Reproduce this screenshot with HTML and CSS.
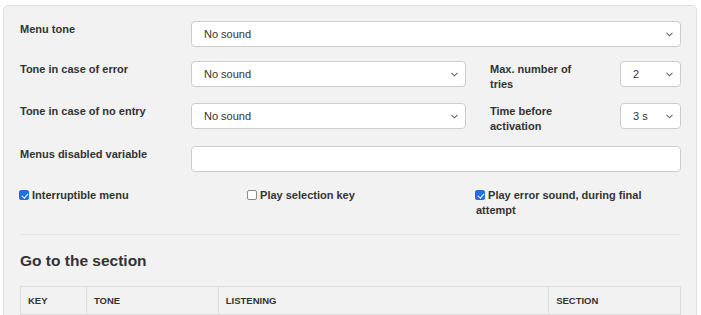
FILE: index.html
```html
<!DOCTYPE html>
<html lang="en">

<head>
  <meta charset="utf-8" />
  <title>Menu settings</title>
  <meta name="viewport" content="width=device-width, initial-scale=1">
  <link rel="stylesheet" href="styles.css">
</head>

<body>
  <section class="panel">
    <!-- ===== FORM ===== -->
    <div class="form-grid">
      <label class="lbl">Menu tone</label>
      <div class="select-wrap span-all">
        <select><option>No sound</option></select>
        <svg class="chev" width="7" height="5" viewBox="0 0 7 5"><path d="M0.5 0.8 L3.5 3.8 L6.5 0.8" fill="none" stroke="#666" stroke-width="1.1"/></svg>
      </div>

      <label class="lbl">Tone in case of error</label>
      <div class="select-wrap">
        <select><option>No sound</option></select>
        <svg class="chev" width="7" height="5" viewBox="0 0 7 5"><path d="M0.5 0.8 L3.5 3.8 L6.5 0.8" fill="none" stroke="#666" stroke-width="1.1"/></svg>
      </div>
      <label class="lbl lbl-side">Max. number of tries</label>
      <div class="select-wrap">
        <select><option>2</option></select>
        <svg class="chev" width="7" height="5" viewBox="0 0 7 5"><path d="M0.5 0.8 L3.5 3.8 L6.5 0.8" fill="none" stroke="#666" stroke-width="1.1"/></svg>
      </div>

      <label class="lbl">Tone in case of no entry</label>
      <div class="select-wrap">
        <select><option>No sound</option></select>
        <svg class="chev" width="7" height="5" viewBox="0 0 7 5"><path d="M0.5 0.8 L3.5 3.8 L6.5 0.8" fill="none" stroke="#666" stroke-width="1.1"/></svg>
      </div>
      <label class="lbl lbl-side">Time before activation</label>
      <div class="select-wrap">
        <select><option>3 s</option></select>
        <svg class="chev" width="7" height="5" viewBox="0 0 7 5"><path d="M0.5 0.8 L3.5 3.8 L6.5 0.8" fill="none" stroke="#666" stroke-width="1.1"/></svg>
      </div>

      <label class="lbl">Menus disabled variable</label>
      <input class="text-input span-all" type="text">
    </div>

    <!-- ===== CHECKS ===== -->
    <div class="checks">
      <label class="check"><input type="checkbox" checked> Interruptible menu</label>
      <label class="check"><input type="checkbox"> Play selection key</label>
      <label class="check"><input type="checkbox" checked> Play error sound, during final attempt</label>
    </div>

    <hr class="sep">

    <h2>Go to the section</h2>

    <table class="sections">
      <thead>
        <tr>
          <th class="c-key">Key</th>
          <th class="c-tone">Tone</th>
          <th class="c-listen">Listening</th>
          <th class="c-section">Section</th>
        </tr>
      </thead>
    </table>
  </section>
</body>

</html>
```

FILE: styles.css
```css
/* ===== RESET & BODY ===== */
* {
  box-sizing: border-box;
  margin: 0;
  padding: 0
}

body {
  font-family: "Liberation Sans", Arial, sans-serif;
  font-size: 11px;
  color: #333;
  background: #fff;
  padding: 5px 4px 0 3px
}

/* ===== PANEL ===== */
.panel {
  background: #f2f2f2;
  border: 1px solid #e0e0e0;
  border-radius: 5px;
  padding: 15px 15px 20px 16px;
  min-height: 340px
}

/* ===== FORM ===== */
.form-grid {
  display: grid;
  grid-template-columns: 171px 275px 154px 61px;
  grid-template-rows: 26px 28px 29px 26px;
  row-gap: 14px
}

.lbl {
  font-weight: bold;
  line-height: 15px;
  padding-top: 1px
}

.lbl-side {
  padding-left: 24px;
  padding-right: 40px
}

.span-all {
  grid-column: 2 / 5
}

.select-wrap {
  position: relative;
  height: 26px
}

select,
.text-input {
  width: 100%;
  height: 26px;
  border: 1px solid #ccc;
  border-radius: 4px;
  background: #fff;
  font-family: inherit;
  font-size: 11px;
  color: #333;
  padding: 0 12px;
  appearance: none;
  -webkit-appearance: none;
  outline: none
}

.chev {
  position: absolute;
  right: 8px;
  top: 11px;
  pointer-events: none
}

/* ===== CHECKBOXES ===== */
.checks {
  display: grid;
  grid-template-columns: repeat(3, 205px);
  column-gap: 23px;
  margin-top: 16px
}

.check {
  display: block;
  font-weight: bold;
  line-height: 15px
}

.check input {
  appearance: none;
  -webkit-appearance: none;
  display: inline-block;
  vertical-align: -1px;
  width: 10px;
  height: 10px;
  margin: 0 0 0 -1px;
  border: 1px solid #8a8a8a;
  border-radius: 2px;
  background: #fff;
  position: relative
}

.check input:checked {
  background: #1f6feb;
  border-color: #1f6feb
}

.check input:checked::after {
  content: "";
  position: absolute;
  left: 2.5px;
  top: 0.5px;
  width: 2.5px;
  height: 5px;
  border: solid #fff;
  border-width: 0 1.3px 1.3px 0;
  transform: rotate(40deg)
}

/* ===== SECTION ===== */
.sep {
  border: 0;
  border-top: 1px solid #e3e3e3;
  margin-top: 16px
}

h2 {
  font-size: 15.5px;
  font-weight: bold;
  color: #333;
  margin: 16px 0 15px;
  line-height: 20px
}

.sections {
  width: 661px;
  border-collapse: collapse
}

.sections th {
  height: 28px;
  border: 1px solid #ddd;
  text-align: left;
  padding: 0 7px;
  font-size: 9.5px;
  font-weight: bold;
  text-transform: uppercase;
  color: #333
}

.c-key {
  width: 66px
}

.c-tone {
  width: 132px
}

.c-listen {
  width: 331px
}

.c-section {
  width: 132px
}
```
